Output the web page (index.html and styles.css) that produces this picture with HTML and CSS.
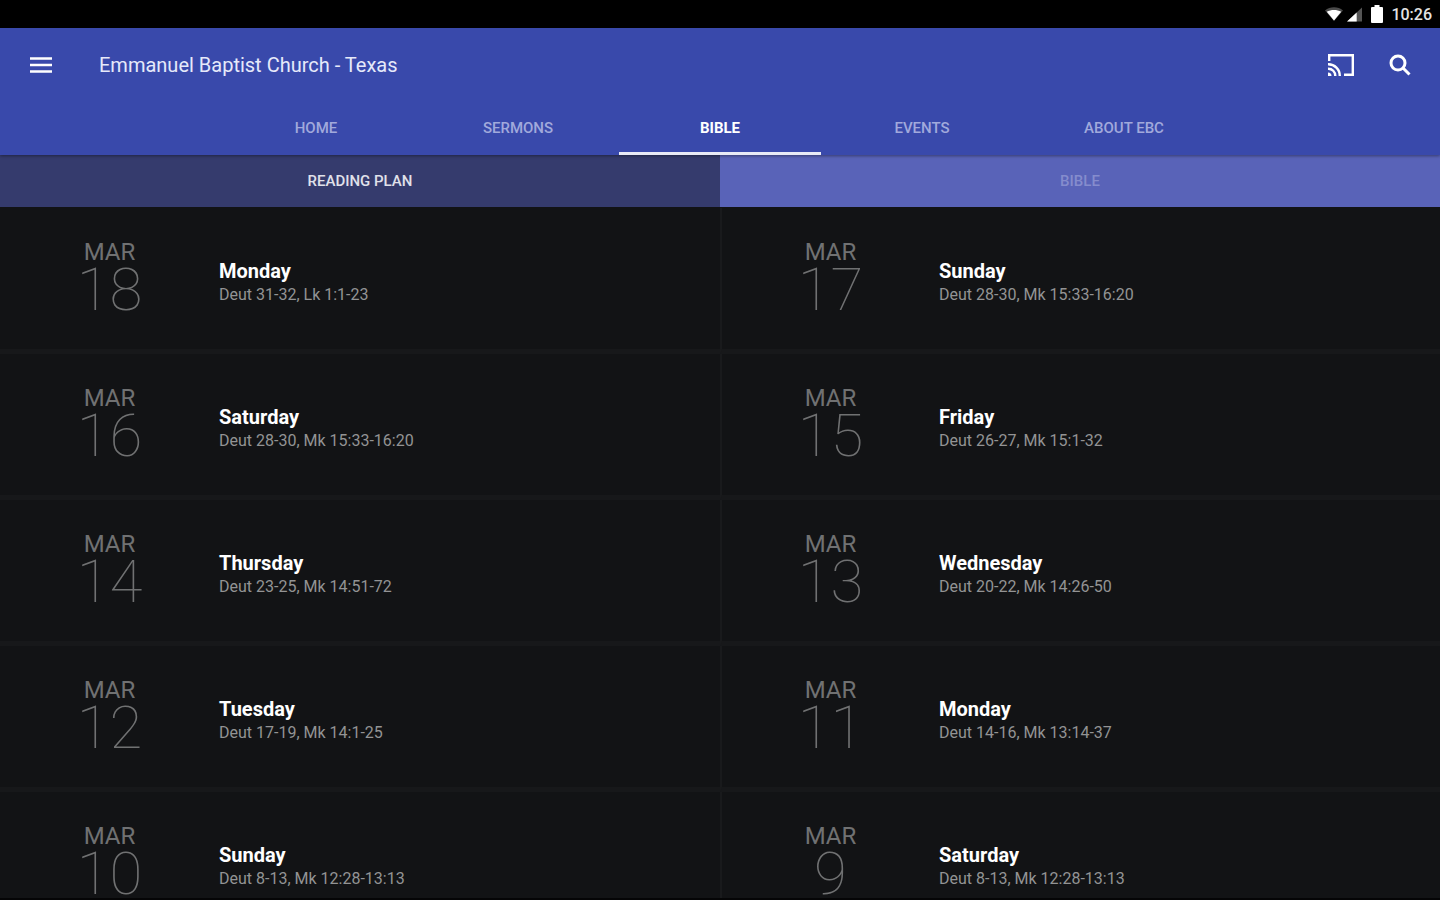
FILE: index.html
```
<!DOCTYPE html>
<html lang="en">
<head>
    <meta charset="UTF-8">
    <meta name="viewport" content="width=device-width, initial-scale=1.0">
    <title>Emmanuel Baptist Church - Texas</title>
    <link rel="stylesheet" href="styles.css">
</head>
<body>
    <div class="status-bar">
        <svg width="18" height="14" viewBox="0 0 18 14" aria-hidden="true">
            <path d="M0 3.5C5 -.8 13 -.8 18 3.5L9 14z" fill="#4a4a4a"/>
            <path d="M1.800 4.700C6 2.500 12 2.500 16.200 4.700L9 13.500z" fill="#fff"/>
        </svg>
        <svg class="signal" width="15" height="15" viewBox="0 0 17 16" aria-hidden="true">
            <path d="M0 16L17 0v16z" fill="#555"/>
            <path d="M0 16L11 5.600V16z" fill="#fff"/>
        </svg>
        <svg class="battery" width="12" height="18" viewBox="0 0 12 18" aria-hidden="true">
            <path d="M3.500 0h5v2H11q1 0 1 1v14q0 1-1 1H1q-1 0-1-1V3q0-1 1-1h2.500z" fill="#fff"/>
        </svg>
        <time class="clock">10:26</time>
    </div>

    <header class="app-header">
        <div class="toolbar">
            <button class="icon-button" aria-label="Menu">
                <svg width="22" height="18" viewBox="0 0 22 18"><path d="M0 2.500h22M0 9h22M0 15.500h22" stroke="#fff" stroke-width="2.500"/></svg>
            </button>
            <h1>Emmanuel Baptist Church - Texas</h1>
            <div class="actions">
                <button class="icon-button" aria-label="Cast">
                    <svg width="28" height="24" viewBox="0 0 28 24" fill="none" stroke="#fff" stroke-width="2.400">
                        <path d="M2.200 8V2.200h23.600v19.600H17"/>
                        <path d="M1 11.200A11.500 11.500 0 0 1 12.800 23M1 15.700A7 7 0 0 1 8.300 23"/>
                        <path d="M1 19.500A3.500 3.500 0 0 1 4.500 23H1z" fill="#fff" stroke="none"/>
                    </svg>
                </button>
                <button class="icon-button" aria-label="Search">
                    <svg width="22" height="22" viewBox="0 0 22 22" fill="none" stroke="#fff" stroke-width="3">
                        <circle cx="9" cy="9" r="7"/>
                        <path d="M14 14l6.500 6.500"/>
                    </svg>
                </button>
            </div>
        </div>
        <nav class="tabs">
            <a href="#home">HOME</a>
            <a href="#sermons">SERMONS</a>
            <a href="#bible" class="active">BIBLE</a>
            <a href="#events">EVENTS</a>
            <a href="#about">ABOUT EBC</a>
        </nav>
    </header>

    <div class="sub-tabs">
        <button class="sub-tab selected">READING PLAN</button>
        <button class="sub-tab">BIBLE</button>
    </div>

    <main class="plan">
        <a class="day" href="#mar-18">
            <div class="date"><span class="month">MAR</span><span class="number">18</span></div>
            <div class="reading"><h2>Monday</h2><p>Deut 31-32, Lk 1:1-23</p></div>
        </a>
        <a class="day" href="#mar-17">
            <div class="date"><span class="month">MAR</span><span class="number">17</span></div>
            <div class="reading"><h2>Sunday</h2><p>Deut 28-30, Mk 15:33-16:20</p></div>
        </a>
        <a class="day" href="#mar-16">
            <div class="date"><span class="month">MAR</span><span class="number">16</span></div>
            <div class="reading"><h2>Saturday</h2><p>Deut 28-30, Mk 15:33-16:20</p></div>
        </a>
        <a class="day" href="#mar-15">
            <div class="date"><span class="month">MAR</span><span class="number">15</span></div>
            <div class="reading"><h2>Friday</h2><p>Deut 26-27, Mk 15:1-32</p></div>
        </a>
        <a class="day" href="#mar-14">
            <div class="date"><span class="month">MAR</span><span class="number">14</span></div>
            <div class="reading"><h2>Thursday</h2><p>Deut 23-25, Mk 14:51-72</p></div>
        </a>
        <a class="day" href="#mar-13">
            <div class="date"><span class="month">MAR</span><span class="number">13</span></div>
            <div class="reading"><h2>Wednesday</h2><p>Deut 20-22, Mk 14:26-50</p></div>
        </a>
        <a class="day" href="#mar-12">
            <div class="date"><span class="month">MAR</span><span class="number">12</span></div>
            <div class="reading"><h2>Tuesday</h2><p>Deut 17-19, Mk 14:1-25</p></div>
        </a>
        <a class="day" href="#mar-11">
            <div class="date"><span class="month">MAR</span><span class="number">11</span></div>
            <div class="reading"><h2>Monday</h2><p>Deut 14-16, Mk 13:14-37</p></div>
        </a>
        <a class="day" href="#mar-10">
            <div class="date"><span class="month">MAR</span><span class="number">10</span></div>
            <div class="reading"><h2>Sunday</h2><p>Deut 8-13, Mk 12:28-13:13</p></div>
        </a>
        <a class="day" href="#mar-9">
            <div class="date"><span class="month">MAR</span><span class="number">9</span></div>
            <div class="reading"><h2>Saturday</h2><p>Deut 8-13, Mk 12:28-13:13</p></div>
        </a>
    </main>
</body>
</html>
```
FILE: styles.css
```
* {
    box-sizing: border-box;
}

body {
    margin: 0;
    height: 100vh;
    display: flex;
    flex-direction: column;
    overflow: hidden;
    font-family: Roboto, sans-serif;
    background-color: #121315;
    color: #fff;
}

h1, h2, p {
    margin: 0;
}

a {
    color: inherit;
    text-decoration: none;
}

button {
    border: 0;
    padding: 0;
    background: none;
    color: inherit;
    font-family: inherit;
    cursor: pointer;
}

svg {
    display: block;
}

/* Android status bar */
.status-bar {
    flex: none;
    display: flex;
    justify-content: flex-end;
    align-items: center;
    height: 28px;
    padding-right: 8px;
    background-color: #000;
}

.signal {
    margin-left: 4px;
}

.battery {
    margin-left: 9px;
}

.clock {
    margin-left: 8px;
    font-size: 16px;
    font-weight: 500;
    color: #e4e4e4;
}

/* Header */
.app-header {
    flex: none;
    background-color: #3949ab;
    position: relative;
    box-shadow: 0 1px 3px rgba(0, 0, 0, 0.4);
}

.toolbar {
    display: flex;
    align-items: center;
    height: 74px;
    padding: 0 28px 0 29px;
}

.toolbar h1 {
    margin-left: 46px;
    font-size: 20px;
    font-weight: 400;
    color: #e6e9fa;
}

.icon-button {
    display: flex;
    align-items: center;
    justify-content: center;
    min-width: 24px;
    height: 48px;
}

.actions {
    display: flex;
    gap: 33px;
    margin-left: auto;
}

.tabs {
    display: flex;
    justify-content: center;
}

.tabs a {
    flex: 0 1 202px;
    height: 53px;
    border-bottom: 3px solid transparent;
    text-align: center;
    font-size: 15px;
    font-weight: 500;
    line-height: 52px;
    color: #a1a9dc;
}

.tabs a.active {
    border-bottom-color: #e8eaf6;
    font-weight: 700;
    color: #fff;
}

.sub-tabs {
    flex: none;
    display: flex;
}

.sub-tab {
    flex: 1;
    height: 52px;
    font-size: 15px;
    font-weight: 500;
    color: #858ccd;
    background-color: #5963b8;
}

.sub-tab.selected {
    color: #e0e1ea;
    background-color: #353b6d;
}

/* Reading plan */
.plan {
    flex: 1;
    min-height: 0;
    overflow: hidden;
    display: grid;
    grid-template-columns: 1fr 1fr;
    grid-auto-rows: 146px;
    padding-top: 1px;
    border-bottom: 2px solid #050506;
}

.day {
    display: flex;
    align-items: center;
    border-bottom: 5px solid #17181a;
}

.day:nth-child(even) {
    border-left: 2px solid #191a1c;
}

.date {
    width: 219px;
    display: flex;
    flex-direction: column;
    align-items: center;
    padding-bottom: 6px;
    color: #707172;
}

.day:nth-child(even) .date {
    width: 217px;
}

.month {
    font-size: 24px;
    font-weight: 400;
    line-height: 28px;
}

.number {
    font-size: 60px;
    font-weight: 100;
    line-height: 48px;
}

.reading {
    padding-top: 8px;
}

.reading h2 {
    font-size: 20px;
    font-weight: 700;
    line-height: 24px;
}

.reading p {
    font-size: 16px;
    line-height: 24px;
    color: #939394;
}
```
